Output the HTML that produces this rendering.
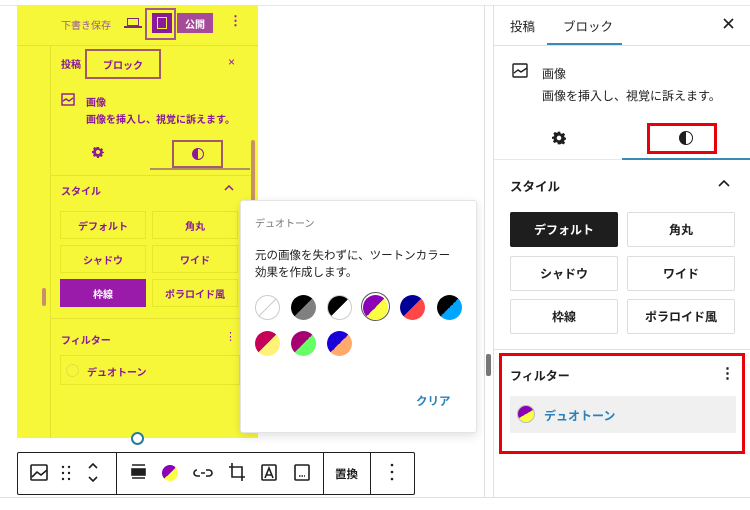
<!DOCTYPE html>
<html><head><meta charset="utf-8"><style>
*{box-sizing:border-box;margin:0;padding:0}
body{width:750px;height:510px;background:#fff;position:relative;overflow:hidden;font-family:"Liberation Sans","Noto Sans CJK JP",sans-serif;color:#1e1e1e}
.a{position:absolute}
.t{position:absolute;white-space:nowrap}
.pb{color:#8a1a9a}
.btn{position:absolute;border:1px solid #ddd;border-radius:2px;font-size:12px;font-weight:bold;display:flex;align-items:center;justify-content:center}
.ybtn{position:absolute;border:1px solid #e6e62a;font-size:10px;font-weight:bold;color:#8a1a9a;display:flex;align-items:center;justify-content:center}
.sw{position:absolute;width:25px;height:25px;border-radius:50%;border:1px solid #ccc}
</style></head><body>
<div class="a" style="left:0;top:5px;width:750px;height:1px;background:#e6e6e6"></div>
<!-- yellow left -->
<div class="a" style="left:17px;top:5px;width:241px;height:433px;background:#f7f73a"></div>
<div class="a" style="left:17px;top:45px;width:241px;height:1px;background:#e3e330"></div>
<div class="a" style="left:50px;top:46px;width:1px;height:392px;background:#e3e330"></div>
<div class="t" style="left:61px;top:17px;font-size:10px;color:#9a5a9a">下書き保存</div>
<div class="a" style="left:127px;top:18px;width:12px;height:8px;border:1.5px solid #7a2a7a"></div>
<div class="a" style="left:124px;top:26px;width:18px;height:1.5px;background:#7a2a7a"></div>
<div class="a" style="left:145px;top:8px;width:31px;height:32px;border:2px solid #a05a90"></div>
<div class="a" style="left:152px;top:13px;width:20px;height:20px;background:#8a1a9a"></div>
<div class="a" style="left:157px;top:17px;width:10px;height:12px;border:1.5px solid #f7f73a"></div>
<div class="a" style="left:177px;top:13px;width:36px;height:20px;background:#a64a9a;color:#fff;font-size:10px;font-weight:bold;display:flex;align-items:center;justify-content:center">公開</div>
<div class="t pb" style="left:229px;top:13px;font-size:13px;font-weight:bold">⋮</div>
<div class="t pb" style="left:61px;top:56px;font-size:10px;font-weight:bold">投稿</div>
<div class="a" style="left:85px;top:49px;width:76px;height:30px;border:2px solid #a05a6a;color:#8a1a9a;font-size:10px;font-weight:bold;display:flex;align-items:center;justify-content:center">ブロック</div>
<div class="t pb" style="left:228px;top:55px;font-size:12px">×</div>
<svg class="a" style="left:61px;top:93px" width="14" height="13" fill="none" stroke="#8a1a9a" stroke-width="1.4"><rect x="1" y="1" width="12" height="11"/><path d="M2 8l3-2 3 2 4-3"/></svg>
<div class="t pb" style="left:86px;top:94px;font-size:10px;font-weight:bold">画像</div>
<div class="t pb" style="left:86px;top:111px;font-size:10px;font-weight:bold">画像を挿入し、視覚に訴えます。</div>
<svg class="a" style="left:92px;top:146px" width="12" height="12" viewBox="0 0 24 24"><path fill="#8a1a9a" d="M10 2h4l.6 2.7 2.2 1 2.4-1.5 2.8 2.8-1.5 2.4 1 2.2L24 12v0l-.3 2-2.7.6-1 2.2 1.5 2.4-2.8 2.8-2.4-1.5-2.2 1L14 24h-4l-.6-2.7-2.2-1-2.4 1.5-2.8-2.8 1.5-2.4-1-2.2L0 14v-4l2.7-.6 1-2.2-1.5-2.4 2.8-2.8 2.4 1.5 2.2-1zM12 8a4 4 0 1 0 0 8 4 4 0 0 0 0-8z"/></svg>
<div class="a" style="left:172px;top:140px;width:51px;height:28px;border:2px solid #a05a6a"></div>
<div class="a" style="left:192px;top:148px;width:12px;height:12px;border-radius:50%;border:1.5px solid #8a1a9a;background:linear-gradient(90deg,#8a1a9a 50%,transparent 50%)"></div>
<div class="a" style="left:150px;top:168px;width:100px;height:1.5px;background:#b09060"></div>
<div class="a" style="left:51px;top:175px;width:200px;height:1px;background:#e3e330"></div>
<div class="t pb" style="left:61px;top:183px;font-size:10px;font-weight:bold">スタイル</div>
<svg class="a" style="left:224px;top:185px" width="10" height="6" fill="none" stroke="#8a1a9a" stroke-width="1.5"><path d="M1 5l4-4 4 4"/></svg>
<div class="ybtn" style="left:60px;top:211px;width:86px;height:28px">デフォルト</div>
<div class="ybtn" style="left:152px;top:211px;width:86px;height:28px">角丸</div>
<div class="ybtn" style="left:60px;top:245px;width:86px;height:28px">シャドウ</div>
<div class="ybtn" style="left:152px;top:245px;width:86px;height:28px">ワイド</div>
<div class="ybtn" style="left:60px;top:279px;width:86px;height:28px;background:#9a1aaa;color:#fff;border-color:#9a1aaa">枠線</div>
<div class="ybtn" style="left:152px;top:279px;width:86px;height:28px">ポラロイド風</div>
<div class="a" style="left:51px;top:318px;width:200px;height:1px;background:#e3e330"></div>
<div class="t pb" style="left:61px;top:332px;font-size:10px;font-weight:bold">フィルター</div>
<div class="t pb" style="left:225px;top:330px;font-size:11px">⋮</div>
<div class="a" style="left:60px;top:355px;width:180px;height:30px;border:1px solid #e6e62a"></div>
<div class="a" style="left:66px;top:364px;width:13px;height:13px;border-radius:50%;border:1px solid #e0e040"></div>
<div class="t pb" style="left:87px;top:364px;font-size:10px;font-weight:bold">デュオトーン</div>
<div class="a" style="left:251px;top:140px;width:4px;height:170px;background:#c8906a;border-radius:2px"></div>
<div class="a" style="left:42px;top:288px;width:4px;height:18px;background:#c8906a;border-radius:2px"></div>
<div class="a" style="left:131px;top:432px;width:13px;height:13px;border-radius:50%;border:2px solid #2a7aa0;background:#fff"></div>
<!-- popover -->
<div class="a" style="left:240px;top:200px;width:237px;height:233px;background:#fff;border:1px solid #e4e4e4;border-radius:3px;box-shadow:0 3px 10px rgba(0,0,0,.12)"></div>
<div class="t" style="left:255px;top:215px;font-size:10px;color:#757575">デュオトーン</div>
<div class="t" style="left:255px;top:248px;font-size:11.5px;color:#1e1e1e;line-height:17px">元の画像を失わずに、ツートンカラー<br>効果を作成します。</div>
<div class="sw" style="left:255px;top:295px;background:linear-gradient(135deg,#fff 48%,#ccc 48%,#ccc 52%,#fff 52%)"></div>
<div class="sw" style="left:291px;top:295px;border:none;background:linear-gradient(135deg,#000 50%,#808080 50%)"></div>
<div class="sw" style="left:327px;top:295px;background:linear-gradient(135deg,#000 50%,#fff 50%)"></div>
<div class="a" style="left:361px;top:292px;width:29px;height:29px;border-radius:50%;border:1.5px solid #555"></div>
<div class="sw" style="left:363px;top:295px;border:none;background:linear-gradient(135deg,#8c00b7 50%,#fcff41 50%)"></div>
<div class="sw" style="left:400px;top:295px;border:none;background:linear-gradient(135deg,#000097 50%,#ff4747 50%)"></div>
<div class="sw" style="left:437px;top:295px;border:none;background:linear-gradient(135deg,#000 50%,#00a5ff 50%)"></div>
<div class="sw" style="left:255px;top:331px;border:none;background:linear-gradient(135deg,#c7005a 50%,#fff278 50%)"></div>
<div class="sw" style="left:291px;top:331px;border:none;background:linear-gradient(135deg,#a60072 50%,#67ff66 50%)"></div>
<div class="sw" style="left:327px;top:331px;border:none;background:linear-gradient(135deg,#1900d8 50%,#ffa96b 50%)"></div>
<div class="t" style="left:416px;top:393px;font-size:11.5px;font-weight:bold;color:#2a80b8">クリア</div>
<!-- toolbar -->
<div class="a" style="left:17px;top:452px;width:398px;height:43px;border:1px solid #1e1e1e;border-radius:2px;background:#fff"></div>
<div class="a" style="left:116px;top:452px;width:1px;height:43px;background:#1e1e1e"></div>
<div class="a" style="left:323px;top:452px;width:1px;height:43px;background:#1e1e1e"></div>
<div class="a" style="left:370px;top:452px;width:1px;height:43px;background:#1e1e1e"></div>
<svg class="a" style="left:0;top:452px" width="415" height="43" viewBox="0 452 415 43" fill="none" stroke="#1e1e1e" stroke-width="1.6">
<rect x="31" y="465" width="16" height="15" rx="1"/><path d="M32 477l5-5 4 3 6-5"/>
<g fill="#1e1e1e" stroke="none"><circle cx="63" cy="467" r="1.2"/><circle cx="69" cy="467" r="1.2"/><circle cx="63" cy="473" r="1.2"/><circle cx="69" cy="473" r="1.2"/><circle cx="63" cy="479" r="1.2"/><circle cx="69" cy="479" r="1.2"/></g>
<path d="M89 468l4-4 4 4M89 477l4 4 4-4"/>
<path d="M132 465h13M132 478h13" /><rect x="132" y="469" width="13" height="6" fill="#1e1e1e"/>
<path d="M197 470a3 3 0 0 0 0 6h3M206 470h3a3 3 0 0 1 0 6h-3M201 473h4"/>
<path d="M232 463v14h13M229 467h13v14"/>
<rect x="262" y="465" width="14" height="15" rx="1"/><path d="M265 478l4-10 4 10M266 475h6"/>
<rect x="295" y="465" width="14" height="15" rx="1"/><path d="M299 476h6" stroke-dasharray="1.5 1"/>
<g fill="#1e1e1e" stroke="none"><circle cx="392" cy="465" r="1.3"/><circle cx="392" cy="472" r="1.3"/><circle cx="392" cy="479" r="1.3"/></g>
</svg>
<div class="a" style="left:162px;top:465px;width:16px;height:16px;border-radius:50%;background:linear-gradient(135deg,#8c00b7 50%,#fcff41 50%)"></div>
<div class="t" style="left:335px;top:466px;font-size:11.5px;font-weight:bold">置換</div>
<div class="a" style="left:0;top:497px;width:750px;height:1px;background:#e0e0e0"></div>
<!-- right panel -->
<div class="a" style="left:484px;top:5px;width:1px;height:492px;background:#e0e0e0"></div>
<div class="a" style="left:486px;top:354px;width:5px;height:22px;background:#777;border-radius:2px"></div>
<div class="a" style="left:493px;top:5px;width:1px;height:492px;background:#e0e0e0"></div>
<div class="t" style="left:510px;top:16px;font-size:12.5px">投稿</div>
<div class="t" style="left:563px;top:16px;font-size:12.5px">ブロック</div>
<div class="a" style="left:547px;top:43px;width:75px;height:2px;background:#3a8ab8"></div>
<svg class="a" style="left:723px;top:18px" width="11" height="11" stroke="#1e1e1e" stroke-width="1.6"><path d="M1 1l9 9M10 1l-9 9"/></svg>
<div class="a" style="left:494px;top:45px;width:256px;height:1px;background:#e0e0e0"></div>
<svg class="a" style="left:512px;top:63px" width="17" height="16" fill="none" stroke="#1e1e1e" stroke-width="1.4"><rect x="1" y="1" width="14" height="13" rx="1"/><path d="M2 10l4-3 3 2 6-4"/></svg>
<div class="t" style="left:542px;top:65px;font-size:12px">画像</div>
<div class="t" style="left:542px;top:87px;font-size:12px">画像を挿入し、視覚に訴えます。</div>
<svg class="a" style="left:552px;top:131px" width="14" height="14" viewBox="0 0 24 24"><path fill="#1e1e1e" d="M10 1h4l.6 3 2.4 1 2.6-1.7 2.8 2.8L20.7 8.7l1 2.4 3 .6v0 .6l-.3 2.4-2.7.6-1 2.4 1.7 2.6-2.8 2.8-2.6-1.7-2.4 1L14 23h-4l-.6-3-2.4-1-2.6 1.7-2.8-2.8 1.7-2.6-1-2.4L0 14v-4l3-.6 1-2.4-1.7-2.6 2.8-2.8L7.7 3.3 10 2.3zM12 8a4 4 0 1 0 0 8 4 4 0 0 0 0-8z"/></svg>
<div class="a" style="left:647px;top:123px;width:70px;height:31px;border:3px solid #e8000b"></div>
<div class="a" style="left:679px;top:131px;width:14px;height:14px;border-radius:50%;border:1.6px solid #1e1e1e;background:linear-gradient(90deg,#1e1e1e 50%,transparent 50%)"></div>
<div class="a" style="left:494px;top:159px;width:256px;height:1px;background:#e8e8e8"></div>
<div class="a" style="left:622px;top:158px;width:128px;height:2px;background:#3a8ab8"></div>
<div class="t" style="left:510px;top:176px;font-size:12.5px;font-weight:bold">スタイル</div>
<svg class="a" style="left:718px;top:180px" width="12" height="7" fill="none" stroke="#1e1e1e" stroke-width="1.6"><path d="M1 6l5-5 5 5"/></svg>
<div class="btn" style="left:510px;top:212px;width:108px;height:35px;background:#1e1e1e;color:#fff;border-color:#1e1e1e">デフォルト</div>
<div class="btn" style="left:627px;top:212px;width:108px;height:35px">角丸</div>
<div class="btn" style="left:510px;top:256px;width:108px;height:35px">シャドウ</div>
<div class="btn" style="left:627px;top:256px;width:108px;height:35px">ワイド</div>
<div class="btn" style="left:510px;top:299px;width:108px;height:35px">枠線</div>
<div class="btn" style="left:627px;top:299px;width:108px;height:35px">ポラロイド風</div>
<div class="a" style="left:494px;top:349px;width:256px;height:1px;background:#e0e0e0"></div>
<div class="a" style="left:499px;top:353px;width:246px;height:101px;border:3px solid #e8000b"></div>
<div class="t" style="left:510px;top:367px;font-size:12px;font-weight:bold">フィルター</div>
<div class="t" style="left:720px;top:364px;font-size:15px;font-weight:bold">⋮</div>
<div class="a" style="left:510px;top:396px;width:226px;height:37px;background:#f0f0f0;border-radius:2px"></div>
<div class="a" style="left:517px;top:405px;width:18px;height:18px;border-radius:50%;border:1px solid #bbb;background:linear-gradient(150deg,#8c00b7 50%,#fcff41 50%)"></div>
<div class="t" style="left:544px;top:407px;font-size:12px;font-weight:bold;color:#2a80b8">デュオトーン</div>
</body></html>
